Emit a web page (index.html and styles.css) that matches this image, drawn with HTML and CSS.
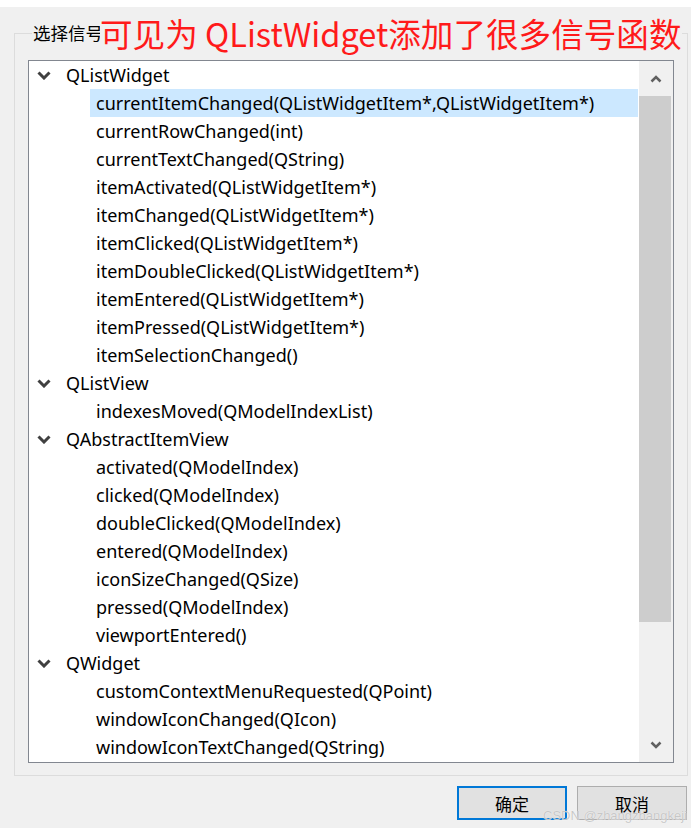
FILE: index.html
```html
<!DOCTYPE html>
<html lang="zh">
<head>
<meta charset="utf-8">
<title>选择信号</title>
<link rel="stylesheet" href="styles.css">
</head>
<body>
<div class="page">
  <div class="topstrip"></div>
  <div class="group">
    <div class="group-title">选择信号</div>
    <div class="note">可见为 QListWidget添加了很多信号函数</div>
    <div class="tree">
      <div class="rows">
        <div class="row top"><svg class="chev" viewBox="0 0 14 9"><polyline points="1.5,1.5 7,7 12.5,1.5"/></svg><span>QListWidget</span></div>
        <div class="row child"><span class="item sel">currentItemChanged(QListWidgetItem*,QListWidgetItem*)</span></div>
        <div class="row child"><span class="item">currentRowChanged(int)</span></div>
        <div class="row child"><span class="item">currentTextChanged(QString)</span></div>
        <div class="row child"><span class="item">itemActivated(QListWidgetItem*)</span></div>
        <div class="row child"><span class="item">itemChanged(QListWidgetItem*)</span></div>
        <div class="row child"><span class="item">itemClicked(QListWidgetItem*)</span></div>
        <div class="row child"><span class="item">itemDoubleClicked(QListWidgetItem*)</span></div>
        <div class="row child"><span class="item">itemEntered(QListWidgetItem*)</span></div>
        <div class="row child"><span class="item">itemPressed(QListWidgetItem*)</span></div>
        <div class="row child"><span class="item">itemSelectionChanged()</span></div>
        <div class="row top"><svg class="chev" viewBox="0 0 14 9"><polyline points="1.5,1.5 7,7 12.5,1.5"/></svg><span>QListView</span></div>
        <div class="row child"><span class="item">indexesMoved(QModelIndexList)</span></div>
        <div class="row top"><svg class="chev" viewBox="0 0 14 9"><polyline points="1.5,1.5 7,7 12.5,1.5"/></svg><span>QAbstractItemView</span></div>
        <div class="row child"><span class="item">activated(QModelIndex)</span></div>
        <div class="row child"><span class="item">clicked(QModelIndex)</span></div>
        <div class="row child"><span class="item">doubleClicked(QModelIndex)</span></div>
        <div class="row child"><span class="item">entered(QModelIndex)</span></div>
        <div class="row child"><span class="item">iconSizeChanged(QSize)</span></div>
        <div class="row child"><span class="item">pressed(QModelIndex)</span></div>
        <div class="row child"><span class="item">viewportEntered()</span></div>
        <div class="row top"><svg class="chev" viewBox="0 0 14 9"><polyline points="1.5,1.5 7,7 12.5,1.5"/></svg><span>QWidget</span></div>
        <div class="row child"><span class="item">customContextMenuRequested(QPoint)</span></div>
        <div class="row child"><span class="item">windowIconChanged(QIcon)</span></div>
        <div class="row child"><span class="item">windowIconTextChanged(QString)</span></div>
      </div>
      <div class="scrollbar">
        <div class="sb-btn"><svg class="sb-arrow" viewBox="0 0 12 8"><polyline points="1.5,6.5 6,2 10.5,6.5"/></svg></div>
        <div class="sb-thumb"></div>
        <div class="sb-track"></div>
        <div class="sb-btn"><svg class="sb-arrow" viewBox="0 0 12 8"><polyline points="1.5,1.5 6,6 10.5,1.5"/></svg></div>
      </div>
    </div>
  </div>
  <div class="buttons">
    <button class="btn default">确定</button>
    <button class="btn">取消</button>
  </div>
  <div class="watermark">CSDN @zhangzhangkeji</div>
</div>
</body>
</html>
```
FILE: styles.css
```css
html, body {
  margin: 0;
  padding: 0;
}
body {
  background: #f0f0f0;
  font-family: "Noto Sans", "Noto Sans CJK SC", sans-serif;
  color: #000;
}
.page {
  position: relative;
  width: 691px;
  height: 828px;
  overflow: hidden;
}
.topstrip {
  height: 7px;
  background: #ffffff;
}
.group {
  position: relative;
  margin: 26px 3px 0 14px;
  border: 1px solid #dcdcdc;
  padding: 26px 13px 12px 13px;
}
.group-title {
  position: absolute;
  left: 17px;
  top: -12px;
  padding: 0 1px;
  background: #f0f0f0;
  font-family: "Noto Sans CJK SC", sans-serif;
  font-size: 17.5px;
  line-height: 22px;
}
.note {
  position: absolute;
  left: 85px;
  top: -20px;
  color: #ff1a1a;
  font-family: "Noto Sans CJK SC", sans-serif;
  font-size: 32.6px;
  line-height: 38px;
  white-space: nowrap;
  background: #f0f0f0;
}
.tree {
  display: flex;
  height: 701px;
  border: 1px solid #828790;
  background: #ffffff;
}
.rows {
  flex: 1;
  display: flex;
  flex-direction: column;
  margin-right: 1px;
}
.row {
  height: 28px;
  display: flex;
  align-items: center;
  font-size: 18px;
  white-space: nowrap;
}
.row.top {
  padding-left: 8px;
}
.chev {
  width: 14px;
  height: 9px;
  margin-right: 15px;
  fill: none;
  stroke: #404040;
  stroke-width: 3;
}
.row.child {
  padding-left: 61px;
}
.item {
  flex: 1;
  height: 28px;
  line-height: 28px;
  padding-left: 6px;
}
.item.sel {
  background: #cce8ff;
}
.scrollbar {
  width: 34px;
  display: flex;
  flex-direction: column;
  background: #f0f0f0;
}
.sb-btn {
  height: 35px;
  display: flex;
  align-items: center;
  justify-content: center;
}
.sb-arrow {
  width: 12px;
  height: 8px;
  fill: none;
  stroke: #606060;
  stroke-width: 2.5;
}
.sb-thumb {
  height: 526px;
  width: 32px;
  background: #cdcdcd;
}
.sb-track {
  flex: 1;
}
.buttons {
  display: flex;
  justify-content: flex-end;
  gap: 10px;
  padding: 10px 4px 0 0;
}
.btn {
  width: 110px;
  height: 34px;
  background: #e1e1e1;
  border: 1px solid #adadad;
  font-family: "Noto Sans CJK SC", sans-serif;
  font-size: 17px;
  color: #000;
  padding: 0;
}
.btn.default {
  border: 2px solid #0078d7;
}
.watermark {
  position: absolute;
  right: 4px;
  bottom: 5px;
  font-family: "Liberation Sans", sans-serif;
  font-size: 13px;
  color: rgba(190, 190, 190, 0.85);
  text-shadow: 0 0 1px #ffffff;
}
```
